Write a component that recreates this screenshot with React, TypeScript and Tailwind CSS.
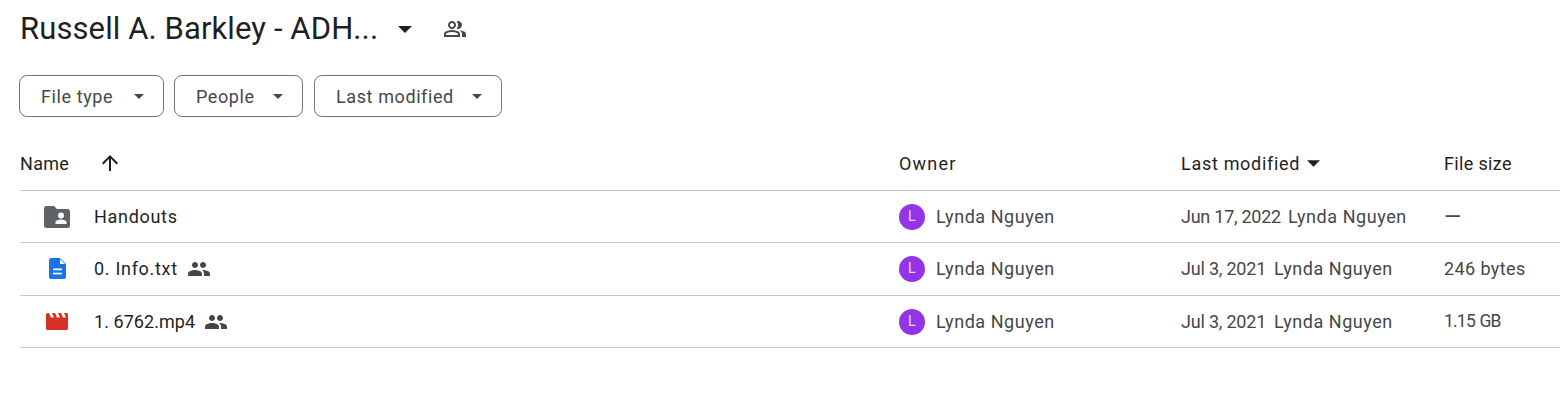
const GROUP = "M16 11c1.66 0 2.99-1.34 2.99-3S17.66 5 16 5c-1.66 0-3 1.34-3 3s1.34 3 3 3zm-8 0c1.66 0 2.99-1.34 2.99-3S9.66 5 8 5C6.34 5 5 6.34 5 8s1.34 3 3 3zm0 2c-2.33 0-7 1.17-7 3.5V19h14v-2.5c0-2.33-4.67-3.5-7-3.5zm8 0c-.29 0-.62.02-.97.05 1.16.84 1.97 1.97 1.97 3.45V19h6v-2.5c0-2.33-4.67-3.5-7-3.5z";
const GROUP_OUTLINE = "M40-160v-112q0-34 17.5-62.5T104-377q62-31 126-46.5T360-439q66 0 130 15.5T616-377q29 15 46.5 43.5T680-272v112H40Zm720 0v-120q0-44-24.5-84.5T666-434q51 6 96 20.5t84 35.5q36 20 55 44.5t19 53.5v120H760ZM360-480q-66 0-113-47t-47-113q0-66 47-113t113-47q66 0 113 47t47 113q0 66-47 113t-113 47Zm400-160q0 66-47 113t-113 47q-11 0-28-2.5t-28-5.5q27-32 41.5-71t14.5-81q0-42-14.5-81T544-792q14-5 28-6.5t28-1.5q66 0 113 47t47 113ZM120-240h480v-32q0-11-5.5-20T580-306q-54-27-109-40.5T360-360q-56 0-111 13.5T140-306q-9 5-14.5 14t-5.500 20v32Zm240-320q33 0 56.500-23.500T440-640q0-33-23.500-56.500T360-720q-33 0-56.500 23.500T280-640q0 33 23.500 56.500T360-560Z";

function Caret({ w, h, color }: { w: number; h: number; color: string }) {
  return (
    <svg width={w} height={h} viewBox="0 0 10 5" className="shrink-0">
      <path d="M0 0l5 5 5-5z" fill={color} />
    </svg>
  );
}

function Chip({ label, w }: { label: string; w: string }) {
  return (
    <div className={`${w} h-[42px] flex items-center justify-between pl-[21px] pr-[19px] rounded-lg border border-[#747775] text-[#444746] text-[18px] tracking-[0.6px]`}>
      <span>{label}</span>
      <Caret w={10} h={5} color="#444746" />
    </div>
  );
}

function Shared({ className }: { className: string }) {
  return (
    <svg width="24" height="24" viewBox="0 0 24 24" className={className}>
      <path d={GROUP} fill="#444746" />
    </svg>
  );
}

function FolderIcon() {
  return (
    <svg width="26" height="22" viewBox="0 0 26 22">
      <path d="M2.5 0h7.5l3 3h10.5a2.5 2.5 0 0 1 2.5 2.5v14a2.5 2.5 0 0 1-2.5 2.5h-21A2.5 2.5 0 0 1 0 19.500V2.500A2.500 2.500 0 0 1 2.500 0z" fill="#5f6368" />
      <circle cx="17" cy="9.500" r="3" fill="#fff" />
      <path d="M11.500 18v-1.800c0-1.700 3.500-2.700 5.500-2.700s5.500 1 5.500 2.700V18z" fill="#fff" />
    </svg>
  );
}

function DocIcon() {
  return (
    <svg width="17" height="21" viewBox="0 0 17 21">
      <path d="M2 0h9l6 6v13a2 2 0 0 1-2 2H2a2 2 0 0 1-2-2V2a2 2 0 0 1 2-2z" fill="#1a73e8" />
      <path d="M11 1v5h5z" fill="#fff" />
      <rect x="4" y="10.500" width="9" height="1.700" fill="#fff" />
      <rect x="4" y="14.700" width="9" height="1.700" fill="#fff" />
    </svg>
  );
}

function MovieIcon() {
  return (
    <svg width="22" height="17" viewBox="0 0 22 17">
      <path d="M1.500 0h19A1.500 1.500 0 0 1 22 1.500v14a1.500 1.500 0 0 1-1.500 1.500h-19A1.500 1.500 0 0 1 0 15.500v-14A1.500 1.500 0 0 1 1.500 0z" fill="#d93025" />
      <path d="M3 0h3l2 4.500H5zM9 0h3l2 4.500h-3zM15 0h3l2 4.500h-3z" fill="#fff" />
    </svg>
  );
}

function Cell({ children, className = "" }: { children: React.ReactNode; className?: string }) {
  return <div className={`flex items-center border-b border-[#c7c7c7] ${className}`}>{children}</div>;
}

function Owner() {
  return (
    <div className="flex items-center text-[#444746] text-[18px] tracking-[0.55px]">
      <div className="w-[26px] h-[26px] rounded-full bg-[#9334e6] text-[#e8d5fa] flex items-center justify-center text-[14px] mr-[11px]">L</div>
      <span>Lynda Nguyen</span>
    </div>
  );
}

const rows = [
  { name: "Handouts", icon: <FolderIcon />, shared: false, date: "Jun 17, 2022", size: "—", h: "h-[52px]", iconBox: "pl-[24px]", nameTrack: "tracking-[0.7px]", dateTrack: "tracking-[-0.25px]", gap: "gap-[7px]", sizeClass: "text-[22px] leading-none" },
  { name: "0. Info.txt", icon: <DocIcon />, shared: true, date: "Jul 3, 2021", size: "246 bytes", h: "h-[53px] pb-[1px]", iconBox: "pl-[29px]", nameTrack: "tracking-[0.7px]", dateTrack: "tracking-[-0.2px]", gap: "gap-[8px]", sizeClass: "text-[18px] tracking-[0.4px]" },
  { name: "1. 6762.mp4", icon: <MovieIcon />, shared: true, date: "Jul 3, 2021", size: "1.15 GB", h: "h-[52px]", iconBox: "pl-[26px]", nameTrack: "tracking-[0.05px]", dateTrack: "tracking-[-0.2px]", gap: "gap-[8px]", sizeClass: "text-[17.5px] tracking-[-0.8px] [word-spacing:1px]" },
];

export default function App() {
  return (
    <div className="w-[1560px] h-[411px] bg-white overflow-hidden font-['Roboto',sans-serif]">
      <div className="h-[58px] pl-[20px] flex items-center">
        <span className="text-[31px] tracking-[0.1px] text-[#1f1f1f] w-[358px] whitespace-nowrap">Russell A. Barkley - ADH...</span>
        <span className="ml-[20px]"><Caret w={14} h={7} color="#1f1f1f" /></span>
        <svg width="24" height="24" viewBox="0 -960 960 960" className="ml-[31px]">
          <path d={GROUP_OUTLINE} fill="#444746" />
        </svg>
      </div>
      <div className="flex pl-[19px] mt-[17px]">
        <Chip label="File type" w="w-[145px]" />
        <div className="ml-[10px]"><Chip label="People" w="w-[129px]" /></div>
        <div className="ml-[11px]"><Chip label="Last modified" w="w-[188px]" /></div>
      </div>
      <div className="ml-[20px] mt-[21px] grid grid-cols-[879px_282px_263px_116px]">
        <Cell className="h-[53px] pb-[2px] text-[18px] text-[#1f1f1f]">
          <span className="tracking-[0.3px]">Name</span>
          <svg width="24" height="24" viewBox="0 0 24 24" className="ml-[29px]">
            <path d="M4 12l1.410 1.410L11 7.830V20h2V7.830l5.580 5.590L20 12l-8-8-8 8z" fill="#1f1f1f" />
          </svg>
        </Cell>
        <Cell className="h-[53px] pb-[2px] text-[18px] text-[#1f1f1f] tracking-[1.2px]"><span>Owner</span></Cell>
        <Cell className="h-[53px] pb-[2px] text-[18px] text-[#1f1f1f] tracking-[0.7px]">
          <span>Last modified</span>
          <span className="ml-[7px]"><Caret w={13} h={7} color="#1f1f1f" /></span>
        </Cell>
        <Cell className="h-[53px] pb-[2px] text-[18px] text-[#1f1f1f] tracking-[0.35px]"><span>File size</span></Cell>
        {rows.map((r) => (
          <div key={r.name} className="contents">
            <Cell className={r.h}>
              <div className={`w-[74px] ${r.iconBox} flex items-center`}>{r.icon}</div>
              <span className={`text-[18px] text-[#1f1f1f] ${r.nameTrack}`}>{r.name}</span>
              {r.shared && <Shared className="ml-[9px]" />}
            </Cell>
            <Cell className={r.h}><Owner /></Cell>
            <Cell className={`${r.h} text-[#444746] text-[18px] ${r.gap}`}>
              <span className={r.dateTrack}>{r.date}</span>
              <span className="tracking-[0.55px]">Lynda Nguyen</span>
            </Cell>
            <Cell className={`${r.h} text-[#444746]`}><span className={r.sizeClass}>{r.size}</span></Cell>
          </div>
        ))}
      </div>
    </div>
  );
}
